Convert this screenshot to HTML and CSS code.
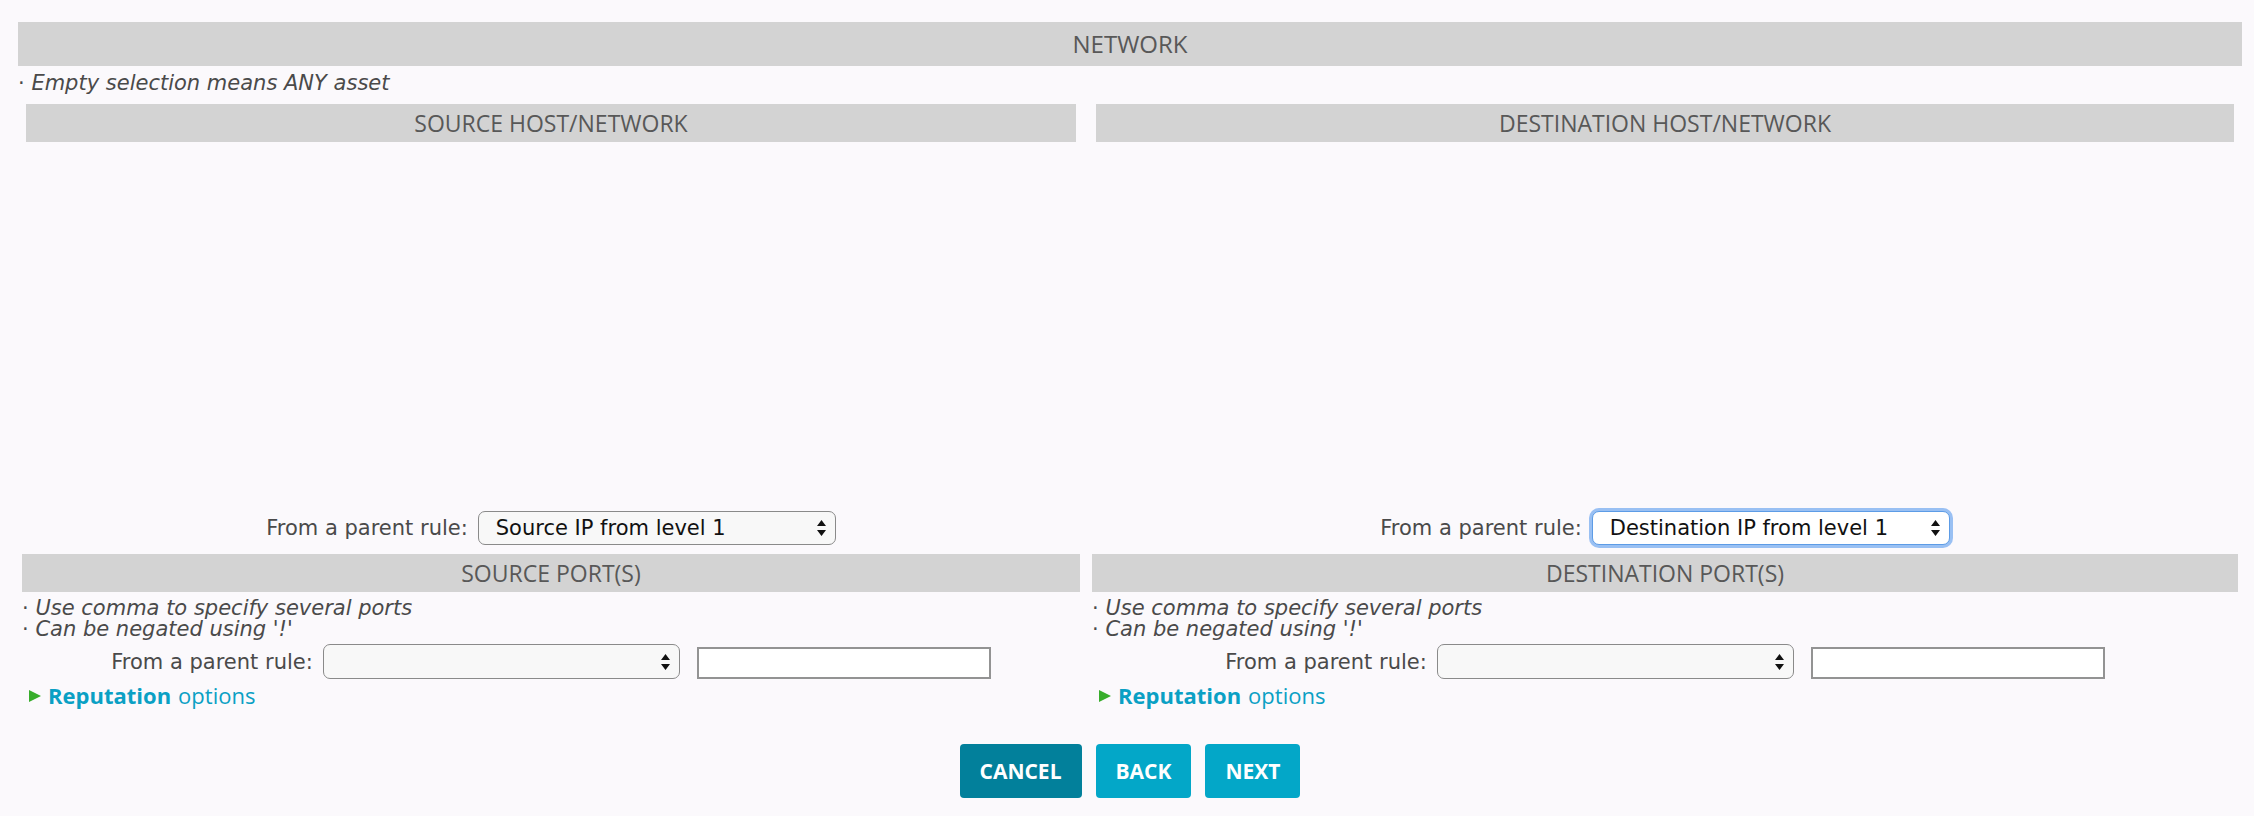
FILE: index.html
```html
<!DOCTYPE html>
<html>
<head>
<meta charset="utf-8">
<link rel="stylesheet" href="styles.css">
</head>
<body>
<div class="page">
  <div class="bar bar-main">NETWORK</div>
  <div class="top-note"><span class="dot">·</span> <i>Empty selection means ANY asset</i></div>

  <div class="grid">
    <div class="cell host">
      <div class="bar">SOURCE HOST/NETWORK</div>
      <div class="tree"></div>
      <div class="parent-row">
        <span class="lbl">From a parent rule:</span>
        <select class="sel sel-host"><option>Source IP from level 1</option></select>
      </div>
    </div>
    <div class="cell host">
      <div class="bar">DESTINATION HOST/NETWORK</div>
      <div class="tree"></div>
      <div class="parent-row">
        <span class="lbl">From a parent rule:</span>
        <select class="sel sel-host focus"><option>Destination IP from level 1</option></select>
      </div>
    </div>

    <div class="cell port">
      <div class="bar">SOURCE PORT(S)</div>
      <div class="notes">
        <div><span class="dot">·</span> <i>Use comma to specify several ports</i></div>
        <div><span class="dot">·</span> <i>Can be negated using '!'</i></div>
      </div>
      <div class="parent-row port-row">
        <span class="lbl">From a parent rule:</span>
        <select class="sel sel-port"><option></option></select>
        <input class="port-input" type="text">
      </div>
      <div class="rep"><span class="tri"></span><b>Reputation</b> options</div>
    </div>
    <div class="cell port">
      <div class="bar">DESTINATION PORT(S)</div>
      <div class="notes">
        <div><span class="dot">·</span> <i>Use comma to specify several ports</i></div>
        <div><span class="dot">·</span> <i>Can be negated using '!'</i></div>
      </div>
      <div class="parent-row port-row">
        <span class="lbl">From a parent rule:</span>
        <select class="sel sel-port"><option></option></select>
        <input class="port-input" type="text">
      </div>
      <div class="rep"><span class="tri"></span><b>Reputation</b> options</div>
    </div>
  </div>

  <div class="buttons">
    <button class="btn btn-cancel">CANCEL</button>
    <button class="btn">BACK</button>
    <button class="btn">NEXT</button>
  </div>
</div>
</body>
</html>
```

FILE: styles.css
```css
html, body {
  margin: 0;
  padding: 0;
  background: #fbf9fc;
}
body {
  font-family: "DejaVu Sans", Verdana, sans-serif;
  font-size: 21px;
  color: #4a4a4a;
}
.page {
  padding: 22px 12px 0 18px;
}
.bar {
  background: #d3d3d3;
  color: #585858;
  font-family: "Open Sans", sans-serif;
  font-size: 23px;
  text-align: center;
  height: 38px;
  line-height: 38px;
}
.bar-main {
  height: 44px;
  line-height: 44px;
  font-size: 24px;
}
.top-note {
  margin-top: 6px;
  line-height: 22px;
}
.dot {
  font-style: normal;
}
.grid {
  display: grid;
  grid-template-columns: 1066fr 1154fr;
  column-gap: 4px;
  row-gap: 9px;
  margin-top: 10px;
}
.cell.host {
  padding: 0 8px;
}
.cell.port {
  padding: 0 4px;
}
.tree {
  height: 369px;
}
.parent-row {
  display: flex;
  justify-content: center;
  align-items: center;
  height: 34px;
}
.lbl {
  margin-right: 10px;
  line-height: 22px;
}
.sel {
  -webkit-appearance: none;
  appearance: none;
  box-sizing: border-box;
  height: 34px;
  border: 1px solid #8a8a8a;
  border-radius: 7px;
  background-color: #f8f8f8;
  background-image: url("data:image/svg+xml;utf8,<svg xmlns='http://www.w3.org/2000/svg' width='9' height='16' viewBox='0 0 9 16'><path d='M4.5 0 L9 6 L0 6 Z M4.5 16 L9 10 L0 10 Z' fill='%23111'/></svg>");
  background-repeat: no-repeat;
  background-position: right 9px center;
  font-family: "DejaVu Sans", Verdana, sans-serif;
  font-size: 21px;
  color: #111;
  padding: 0 30px 0 17px;
  margin: 0;
}
.sel-host {
  width: 358px;
}
.sel.focus {
  border-color: #5d9ce6;
  background-color: #fff;
  box-shadow: 0 0 0 3px rgba(120, 172, 240, 0.75);
}
.notes {
  margin-top: 6px;
  line-height: 21px;
}
.port-row {
  margin-top: 4px;
  height: 35px;
}
.sel-port {
  width: 357px;
  height: 35px;
}
.port-input {
  box-sizing: border-box;
  width: 294px;
  height: 32px;
  margin: 3px 0 0 17px;
  border: 2px solid #939393;
  background: #fff;
  padding: 0 4px;
  font-size: 18px;
}
.rep {
  margin-top: 2px;
  font-family: "Open Sans", sans-serif;
  font-size: 22px;
  line-height: 28px;
  color: #0aa0c4;
  display: flex;
  align-items: center;
}
.rep b {
  font-weight: 700;
  margin-right: 7px;
}
.tri {
  width: 0;
  height: 0;
  border-left: 12px solid #38ad2c;
  border-top: 6px solid transparent;
  border-bottom: 6px solid transparent;
  margin: 2px 7px 0 7px;
}
.buttons {
  display: flex;
  justify-content: center;
  gap: 14px;
  margin-top: 35px;
}
.btn {
  height: 54px;
  border: none;
  border-radius: 4px;
  background: #03a7c8;
  color: #fff;
  font-family: "Open Sans", sans-serif;
  font-weight: 700;
  font-size: 21px;
  padding: 0 20px;
  cursor: pointer;
}
.btn-cancel {
  background: #02809b;
}
```
